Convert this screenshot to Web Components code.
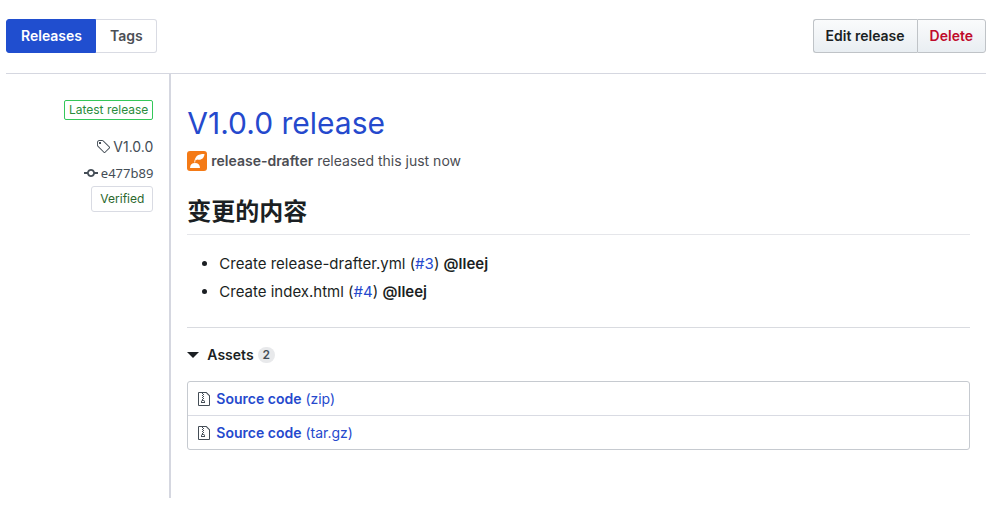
<!DOCTYPE html>
<html lang="en">
<head>
<meta charset="utf-8">
<meta name="viewport" content="width=device-width, initial-scale=1">
<title>V1.0.0 release</title>
<style>
body { margin: 0; background: #fff; color: #1b1f23; font: 14px/20px Inter, "Noto Sans CJK SC", sans-serif; }
</style>
</head>
<body>
<release-page></release-page>
<script>
const define = (name, markup) => {
  const template = document.createElement('template');
  template.innerHTML = markup;
  customElements.define(name, class extends HTMLElement {
    constructor() {
      super();
      this.attachShadow({ mode: 'open' }).append(template.content.cloneNode(true));
    }
  });
};

define('release-toolbar', `
<style>
  :host { display: flex; justify-content: space-between; padding: 19px 0 20px; border-bottom: 1px solid #d5d7e0; }
  nav, .actions { display: flex; }
  a, button { box-sizing: border-box; height: 34px; font: 600 14px/20px Inter, sans-serif; white-space: nowrap; }
  a { padding: 6px 13px 6px 14px; border: 1px solid #d9dbe3; color: #4c4f56; text-decoration: none; }
  a:first-child { border-color: #204ecf; background: #204ecf; color: #fff; border-radius: 3px 0 0 3px; }
  a:last-child { border-left: 0; border-radius: 0 3px 3px 0; }
  button { margin: 0; padding: 6px 12px; border: 1px solid #bfc3c7; background: linear-gradient(#fafbfc, #e9eef2); color: #1b1f23; }
  button:first-child { border-right: 0; border-radius: 3px 0 0 3px; }
  button:last-child { border-radius: 0 3px 3px 0; color: #bf0a2b; }
</style>
<nav aria-label="Release views"><a href="#releases" aria-current="page">Releases</a><a href="#tags">Tags</a></nav>
<div class="actions"><button type="button">Edit release</button><button type="button">Delete</button></div>`);

define('release-meta', `
<style>
  :host { display: flex; flex-direction: column; align-items: flex-end; box-sizing: border-box; padding: 26px 16px 0 0; color: #444d56; }
  .latest { padding: 0 4px; border: 1px solid #34c759; border-radius: 2px; color: #2a8c3c; font-size: 12px; line-height: 18px; }
  a { display: flex; align-items: center; gap: 3px; color: inherit; text-decoration: none; }
  .tag { margin-top: 17px; }
  .commit { margin-top: 6px; font: 13px/20px "Noto Sans", sans-serif; }
  svg { fill: currentColor; }
  button { margin: 3px 0 0; padding: 2px 8px; border: 1px solid #d9dbe3; border-radius: 3px; background: #fff; color: #2c672d; font: 12px/20px Inter, sans-serif; }
</style>
<span class="latest">Latest release</span>
<a class="tag" href="#tag"><svg width="14" height="16" viewBox="0 0 14 16" aria-hidden="true"><path d="M7.73 1.73C7.26 1.26 6.62 1 5.96 1H3.5C2.13 1 1 2.13 1 3.5v2.47c0 .66.27 1.3.73 1.77l6.06 6.06c.39.39 1.02.39 1.41 0l4.59-4.59a.996.996 0 0 0 0-1.41L7.73 1.73zM2.38 7.09c-.31-.3-.47-.7-.47-1.13V3.5c0-.88.72-1.59 1.59-1.59h2.47c.42 0 .83.16 1.13.47l6.14 6.13-4.73 4.73-6.13-6.15zM3.01 3h2v2H3V3h.01z"/></svg><span>V1.0.0</span></a>
<a class="commit" href="#commit"><svg width="14" height="16" viewBox="0 0 14 16" aria-hidden="true"><path d="M10.86 7c-.45-1.72-2-3-3.86-3-1.86 0-3.41 1.28-3.86 3H0v2h3.14c.45 1.72 2 3 3.86 3 1.86 0 3.41-1.28 3.86-3H14V7h-3.14zM7 10.2c-1.22 0-2.2-.98-2.2-2.2 0-1.22.98-2.2 2.2-2.2 1.22 0 2.2.98 2.2 2.2 0 1.22-.98 2.2-2.2 2.2z"/></svg><span>e477b89</span></a>
<button type="button">Verified</button>`);

define('asset-link', `
<style>
  :host { display: block; padding: 7px 10px 6px; }
  a { display: flex; align-items: center; gap: 6px; color: #2549cd; text-decoration: none; }
  svg { fill: #444d56; }
  ::slotted(strong) { font-weight: 600; }
</style>
<a href="#download"><svg width="12" height="16" viewBox="0 0 12 16" aria-hidden="true"><path d="M8.5 1H1a1 1 0 0 0-1 1v12a1 1 0 0 0 1 1h10a1 1 0 0 0 1-1V4.5L8.5 1zM11 14H1V2h3v1h1V2h3l3 3v9zM5 4V3h1v1H5zM4 4h1v1H4V4zm1 2V5h1v1H5zM4 6h1v1H4V6zm1 2V7h1v1H5zM4 9.28A2 2 0 0 0 3 11v1h4v-1a2 2 0 0 0-2-2V8H4v1.28zM6 10v1H4v-1h2z"/></svg><span><slot></slot></span></a>`);

define('release-assets', `
<style>
  :host { display: block; padding-top: 17px; border-top: 1px solid #d9dbe0; }
  summary { display: flex; align-items: center; list-style: none; font-weight: 600; cursor: pointer; }
  summary::-webkit-details-marker { display: none; }
  svg { margin-right: 8px; }
  .count { margin-left: 4px; padding: 0 5px; border-radius: 8px; background: #e8e9eb; color: #444d56; font-size: 12px; line-height: 16px; }
  ul { margin: 16px 0 0; padding: 0; list-style: none; border: 1px solid #c6cad0; border-radius: 3px; }
  li + li { border-top: 1px solid #d9dbe3; }
</style>
<details open>
  <summary><svg width="12" height="6" viewBox="0 0 12 6" aria-hidden="true"><path d="M0 0h12L6 6z" fill="#1b1f23"/></svg>Assets<span class="count">2</span></summary>
  <ul>
    <li><asset-link><strong>Source code</strong> (zip)</asset-link></li>
    <li><asset-link><strong>Source code</strong> (tar.gz)</asset-link></li>
  </ul>
</details>`);

define('release-notes', `
<style>
  :host { display: block; }
  h2 { margin: 0; padding-bottom: 8px; border-bottom: 1px solid #e5e6ea; font: 600 24px/32px "Noto Sans CJK SC", sans-serif; }
  ul { margin: 17px 0 23px; padding-left: 32px; font-size: 15px; line-height: 24px; }
  li + li { margin-top: 4px; }
  a { color: #2549cd; text-decoration: none; }
  a.user { color: inherit; font-weight: 600; }
</style>
<h2 lang="zh-CN">变更的内容</h2>
<ul>
  <li>Create release-drafter.yml (<a href="#3">#3</a>) <a class="user" href="#lleej">@lleej</a></li>
  <li>Create index.html (<a href="#4">#4</a>) <a class="user" href="#lleej">@lleej</a></li>
</ul>`);

define('release-body', `
<style>
  :host { display: block; box-sizing: border-box; padding: 29px 16px 48px; border-left: 2px solid #d5d7e0; }
  h1 { margin: 0 0 8px; font-size: 30px; line-height: 40px; font-weight: 400; }
  h1 a { color: #2549cd; text-decoration: none; }
  .author { display: flex; align-items: center; gap: 4px; margin: 0 0 23px; color: #4b4d53; }
  .author a { color: inherit; font-weight: 600; text-decoration: none; }
</style>
<h1><a href="#release">V1.0.0 release</a></h1>
<p class="author"><svg width="20" height="20" viewBox="0 0 20 20" aria-hidden="true"><rect width="20" height="20" rx="3" fill="#f47a16"/><path d="M3 17c.2-3.200 1.800-5 5-5s4.800 1.800 5 5z" fill="#fff"/><path d="M8.500 9.500C7.800 5.500 10.500 3 17.500 3c-.3 4-2.800 6.500-7.300 5.600" fill="#fff"/><path d="M7.700 11.500c0-3 1.100-4.700 3.500-5.900" fill="none" stroke="#fff" stroke-width=".9"/></svg><span><a href="#release-drafter">release-drafter</a> released this just now</span></p>
<release-notes></release-notes>
<release-assets></release-assets>`);

define('release-page', `
<style>
  :host { display: block; padding: 0 22px 8px 6px; }
  main { display: grid; grid-template-columns: minmax(163px, 1fr) 5fr; }
</style>
<release-toolbar></release-toolbar>
<main><release-meta></release-meta><release-body></release-body></main>`);
</script>
</body>
</html>
